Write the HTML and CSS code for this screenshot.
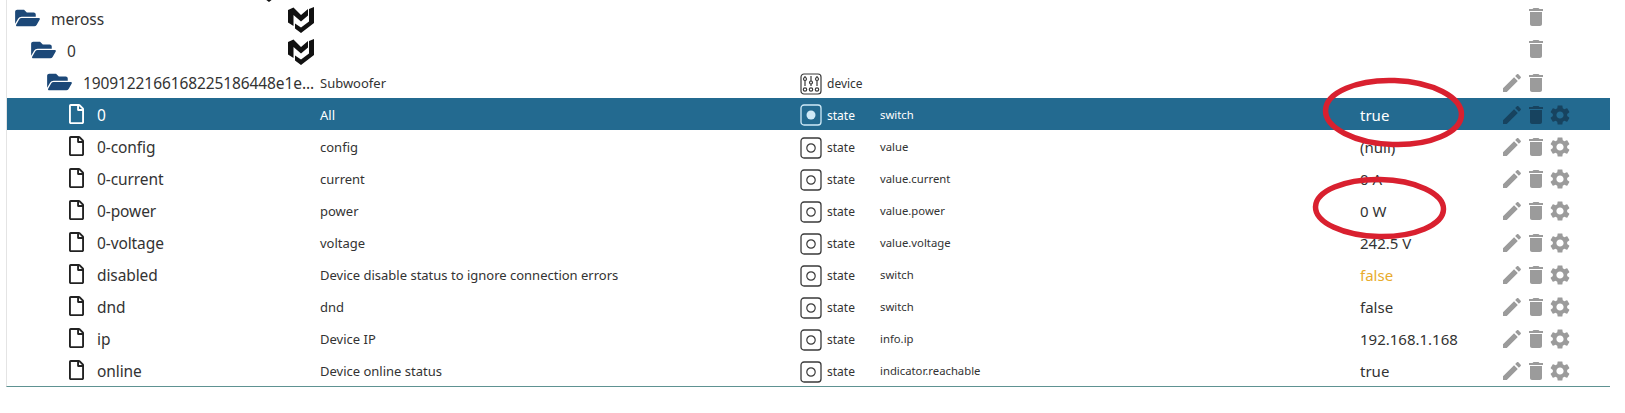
FILE: index.html
```html
<!DOCTYPE html>
<html lang="en">
<head>
<meta charset="utf-8">
<title>meross objects</title>
<link rel="stylesheet" href="styles.css">
</head>
<body>
<svg class="defs" aria-hidden="true">
  <symbol id="i-folder" viewBox="0 0 576 512"><path d="M572.694 292.093L500.27 416.248A63.997 63.997 0 0 1 444.989 448H45.025c-18.523 0-30.064-20.093-20.731-36.093l72.424-124.155A64 64 0 0 1 152 256h399.964c18.523 0 30.064 20.093 20.73 36.093zM152 224h328v-48c0-26.51-21.49-48-48-48H272l-64-64H48C21.49 64 0 85.49 0 112v278.046l69.077-118.418C86.214 242.25 117.989 224 152 224z"/></symbol>
  <symbol id="i-file" viewBox="0 0 384 512"><path d="M369.9 97.9L286 14C277 5 264.8-.1 252.1-.1H48C21.5 0 0 21.5 0 48v416c0 26.5 21.5 48 48 48h288c26.5 0 48-21.5 48-48V131.9c0-12.7-5.1-25-14.1-34zM332.1 128H256V51.9l76.1 76.1zM48 464V48h160v104c0 13.3 10.7 24 24 24h104v288H48z"/></symbol>
  <symbol id="i-edit" viewBox="0 0 24 24"><path d="M3 17.25V21h3.75L17.81 9.94l-3.75-3.75L3 17.25zM20.71 7.04c.39-.39.39-1.02 0-1.41l-2.34-2.34c-.39-.39-1.02-.39-1.41 0l-1.83 1.83 3.75 3.75 1.83-1.83z"/></symbol>
  <symbol id="i-del" viewBox="0 0 24 24"><path d="M6 19c0 1.1.9 2 2 2h8c1.1 0 2-.9 2-2V7H6v12zM19 4h-3.5l-1-1h-5l-1 1H5v2h14V4z"/></symbol>
  <symbol id="i-gear" viewBox="0 0 24 24"><path d="M19.14 12.94c.04-.3.06-.61.06-.94 0-.32-.02-.64-.07-.94l2.03-1.58c.18-.14.23-.41.12-.61l-1.92-3.32c-.12-.22-.37-.29-.59-.22l-2.39.96c-.5-.38-1.03-.7-1.62-.94l-.36-2.54c-.04-.24-.24-.41-.48-.41h-3.84c-.24 0-.43.17-.47.41l-.36 2.54c-.59.24-1.13.57-1.62.94l-2.39-.96c-.22-.08-.47 0-.59.22L2.74 8.87c-.12.21-.08.47.12.61l2.03 1.58c-.05.3-.09.63-.09.94s.02.64.07.94l-2.03 1.58c-.18.14-.23.41-.12.61l1.92 3.32c.12.22.37.29.59.22l2.39-.96c.5.38 1.03.7 1.62.94l.36 2.54c.05.24.24.41.48.41h3.84c.24 0 .44-.17.47-.41l.36-2.54c.59-.24 1.13-.56 1.62-.94l2.39.96c.22.08.47 0 .59-.22l1.92-3.32c.12-.22.07-.47-.12-.61l-2.01-1.58zM12 15.6c-1.98 0-3.6-1.62-3.6-3.6s1.62-3.6 3.6-3.6 3.6 1.62 3.6 3.6-1.62 3.6-3.6 3.6z"/></symbol>
  <symbol id="i-logo" viewBox="0 0 26 26"><path d="M0 3 L5.5 0.5 L13 8 L20 2 V8.5 L13 14.5 L5.5 8 V19 L0 15.5 Z"/><path d="M21 2 L26 0 V16 L13 26 L7 21.5 V16.5 L13 20.5 L21 14.5 Z"/></symbol>
  <symbol id="i-state" viewBox="0 0 22 22"><rect x="1" y="1" width="20" height="20" rx="3" fill="none" stroke="currentColor" stroke-width="1.3"/><circle cx="11" cy="11" r="4.2" fill="none" stroke="currentColor" stroke-width="1.2"/></symbol>
  <symbol id="i-state-on" viewBox="0 0 22 22"><rect x="1" y="1" width="20" height="20" rx="3" fill="none" stroke="currentColor" stroke-width="1.3"/><circle cx="11" cy="11" r="4.5" fill="currentColor"/></symbol>
  <symbol id="i-device" viewBox="0 0 22 22"><g fill="none" stroke="currentColor" stroke-width="1.2"><rect x="1" y="1" width="20" height="20" rx="3"/><path d="M5 3v10M11 3v10M17 3v10"/><circle cx="5" cy="6" r="1.5" fill="#fff"/><circle cx="11" cy="9.5" r="1.5" fill="#fff"/><circle cx="17" cy="6" r="1.5" fill="#fff"/><circle cx="5" cy="16.5" r="1.7"/><circle cx="11" cy="16.5" r="1.7"/><circle cx="17" cy="16.5" r="1.7"/></g></symbol>
</svg>

<main class="tree">
  <div class="cut-row"><svg class="logo cut-logo"><use href="#i-logo"/></svg></div>

  <div class="row">
    <div class="c-name lvl0"><svg class="ic-folder"><use href="#i-folder"/></svg><span class="name">meross</span></div>
    <div class="c-desc"><svg class="logo"><use href="#i-logo"/></svg></div>
    <div class="c-type"></div><div class="c-role"></div><div class="c-val"></div>
    <div class="c-act top"><span class="slot"></span><svg class="act"><use href="#i-del"/></svg><span class="slot"></span></div>
  </div>

  <div class="row">
    <div class="c-name lvl1"><svg class="ic-folder"><use href="#i-folder"/></svg><span class="name">0</span></div>
    <div class="c-desc"><svg class="logo"><use href="#i-logo"/></svg></div>
    <div class="c-type"></div><div class="c-role"></div><div class="c-val"></div>
    <div class="c-act top"><span class="slot"></span><svg class="act"><use href="#i-del"/></svg><span class="slot"></span></div>
  </div>

  <div class="row">
    <div class="c-name lvl2"><svg class="ic-folder"><use href="#i-folder"/></svg><span class="name">1909122166168225186448e1e...</span></div>
    <div class="c-desc">Subwoofer</div>
    <div class="c-type"><svg class="ic-type"><use href="#i-device"/></svg><span>device</span></div>
    <div class="c-role"></div><div class="c-val"></div>
    <div class="c-act"><svg class="act"><use href="#i-edit"/></svg><svg class="act"><use href="#i-del"/></svg><span class="slot"></span></div>
  </div>

  <div class="row selected">
    <div class="c-name lvl3"><svg class="ic-file"><use href="#i-file"/></svg><span class="name">0</span></div>
    <div class="c-desc">All</div>
    <div class="c-type"><svg class="ic-type"><use href="#i-state-on"/></svg><span>state</span></div>
    <div class="c-role">switch</div><div class="c-val">true</div>
    <div class="c-act"><svg class="act"><use href="#i-edit"/></svg><svg class="act"><use href="#i-del"/></svg><svg class="act"><use href="#i-gear"/></svg></div>
  </div>

  <div class="row">
    <div class="c-name lvl3"><svg class="ic-file"><use href="#i-file"/></svg><span class="name">0-config</span></div>
    <div class="c-desc">config</div>
    <div class="c-type"><svg class="ic-type"><use href="#i-state"/></svg><span>state</span></div>
    <div class="c-role">value</div><div class="c-val">(null)</div>
    <div class="c-act"><svg class="act"><use href="#i-edit"/></svg><svg class="act"><use href="#i-del"/></svg><svg class="act"><use href="#i-gear"/></svg></div>
  </div>

  <div class="row">
    <div class="c-name lvl3"><svg class="ic-file"><use href="#i-file"/></svg><span class="name">0-current</span></div>
    <div class="c-desc">current</div>
    <div class="c-type"><svg class="ic-type"><use href="#i-state"/></svg><span>state</span></div>
    <div class="c-role">value.current</div><div class="c-val">0 A</div>
    <div class="c-act"><svg class="act"><use href="#i-edit"/></svg><svg class="act"><use href="#i-del"/></svg><svg class="act"><use href="#i-gear"/></svg></div>
  </div>

  <div class="row">
    <div class="c-name lvl3"><svg class="ic-file"><use href="#i-file"/></svg><span class="name">0-power</span></div>
    <div class="c-desc">power</div>
    <div class="c-type"><svg class="ic-type"><use href="#i-state"/></svg><span>state</span></div>
    <div class="c-role">value.power</div><div class="c-val">0 W</div>
    <div class="c-act"><svg class="act"><use href="#i-edit"/></svg><svg class="act"><use href="#i-del"/></svg><svg class="act"><use href="#i-gear"/></svg></div>
  </div>

  <div class="row">
    <div class="c-name lvl3"><svg class="ic-file"><use href="#i-file"/></svg><span class="name">0-voltage</span></div>
    <div class="c-desc">voltage</div>
    <div class="c-type"><svg class="ic-type"><use href="#i-state"/></svg><span>state</span></div>
    <div class="c-role">value.voltage</div><div class="c-val">242.5 V</div>
    <div class="c-act"><svg class="act"><use href="#i-edit"/></svg><svg class="act"><use href="#i-del"/></svg><svg class="act"><use href="#i-gear"/></svg></div>
  </div>

  <div class="row">
    <div class="c-name lvl3"><svg class="ic-file"><use href="#i-file"/></svg><span class="name">disabled</span></div>
    <div class="c-desc">Device disable status to ignore connection errors</div>
    <div class="c-type"><svg class="ic-type"><use href="#i-state"/></svg><span>state</span></div>
    <div class="c-role">switch</div><div class="c-val warn">false</div>
    <div class="c-act"><svg class="act"><use href="#i-edit"/></svg><svg class="act"><use href="#i-del"/></svg><svg class="act"><use href="#i-gear"/></svg></div>
  </div>

  <div class="row">
    <div class="c-name lvl3"><svg class="ic-file"><use href="#i-file"/></svg><span class="name">dnd</span></div>
    <div class="c-desc">dnd</div>
    <div class="c-type"><svg class="ic-type"><use href="#i-state"/></svg><span>state</span></div>
    <div class="c-role">switch</div><div class="c-val">false</div>
    <div class="c-act"><svg class="act"><use href="#i-edit"/></svg><svg class="act"><use href="#i-del"/></svg><svg class="act"><use href="#i-gear"/></svg></div>
  </div>

  <div class="row">
    <div class="c-name lvl3"><svg class="ic-file"><use href="#i-file"/></svg><span class="name">ip</span></div>
    <div class="c-desc">Device IP</div>
    <div class="c-type"><svg class="ic-type"><use href="#i-state"/></svg><span>state</span></div>
    <div class="c-role">info.ip</div><div class="c-val">192.168.1.168</div>
    <div class="c-act"><svg class="act"><use href="#i-edit"/></svg><svg class="act"><use href="#i-del"/></svg><svg class="act"><use href="#i-gear"/></svg></div>
  </div>

  <div class="row">
    <div class="c-name lvl3"><svg class="ic-file"><use href="#i-file"/></svg><span class="name">online</span></div>
    <div class="c-desc">Device online status</div>
    <div class="c-type"><svg class="ic-type"><use href="#i-state"/></svg><span>state</span></div>
    <div class="c-role">indicator.reachable</div><div class="c-val">true</div>
    <div class="c-act"><svg class="act"><use href="#i-edit"/></svg><svg class="act"><use href="#i-del"/></svg><svg class="act"><use href="#i-gear"/></svg></div>
  </div>
</main>

<svg class="marks" aria-hidden="true">
  <ellipse cx="1393.5" cy="112.5" rx="68" ry="32" transform="rotate(2 1393.5 112.5)"/>
  <ellipse cx="1379.5" cy="208" rx="64" ry="28.5" transform="rotate(1 1379.5 208)"/>
</svg>
</body>
</html>
```
FILE: styles.css
```css
* { box-sizing: border-box; }
html, body { margin: 0; padding: 0; background: #fff; }
body {
  width: 1625px;
  height: 413px;
  overflow: hidden;
  position: relative;
  font-family: "Noto Sans", "Open Sans", sans-serif;
  color: #333;
}
.defs { position: absolute; width: 0; height: 0; }

.tree {
  width: 1604px;
  margin-left: 6px;
  border-left: 1px solid #e4e4e4;
  border-bottom: 1px solid #5e9292;
}
.cut-row { height: 2px; overflow: hidden; display: flex; align-items: flex-end; padding-left: 281px; }
.cut-logo { flex: none; margin-left: 0; }

.row {
  display: grid;
  grid-template-columns: 313px 480px 80px 480px 140px 1fr;
  height: 32px;
  align-items: center;
  font-size: 13px;
}
.row.selected { background: #236a90; color: #fff; }

.c-name { display: flex; align-items: center; min-width: 0; white-space: nowrap; }
.lvl0 { padding-left: 8px; }
.lvl1 { padding-left: 24px; }
.lvl2 { padding-left: 40px; }
.lvl3 { padding-left: 62px; }
.name { font-size: 15.5px; letter-spacing: -0.1px; padding-top: 2px; }

.ic-folder { width: 25px; height: 22px; fill: #1c4878; margin-right: 11px; flex: none; }
.ic-file { width: 15px; height: 20px; fill: #222; margin-right: 13px; flex: none; }
.selected .ic-file { fill: #fff; }

.logo { width: 26px; height: 26px; fill: #111; margin-left: -32px; margin-top: 2px; display: block; }

.c-desc { white-space: nowrap; padding-top: 2px; }
.c-type { display: flex; align-items: center; gap: 5px; font-size: 12px; }
.c-type span { padding-top: 2px; }
.ic-type { width: 22px; height: 22px; margin-top: 4px; color: #3a3a3a; flex: none; }
.selected .ic-type { color: #cfeaf8; margin-top: 2px; }
.selected .ic-type + span { color: #fff; }
.c-role { font-size: 11.3px; white-space: nowrap; }
.c-val { font-size: 15px; white-space: nowrap; padding-top: 2px; }
.warn { color: #e8ab2c; }

.c-act { display: flex; padding-top: 2px; }
.c-act.top { padding-top: 0; padding-bottom: 2px; }
.slot { width: 24px; height: 24px; }
.act { width: 24px; height: 24px; fill: #9b9b9b; flex: none; }
.selected .act { fill: #17435f; }

.marks { position: absolute; left: 0; top: 0; width: 1625px; height: 413px; pointer-events: none; }
.marks ellipse { fill: none; stroke: #d9202f; stroke-width: 5.5; }
```
